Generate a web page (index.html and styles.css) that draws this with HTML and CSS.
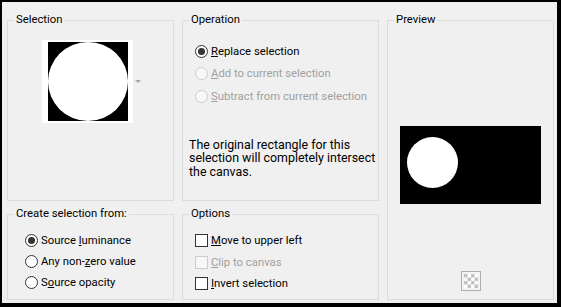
FILE: index.html
```html
<!DOCTYPE html>
<html lang="en">
<head>
  <meta charset="UTF-8">
  <title>Promote Selection</title>
  <link rel="stylesheet" href="styles.css">
</head>
<body>
  <div class="dialog">
    <div class="grid">

      <!-- 当前选区缩略图 -->
      <fieldset class="group sel">
        <legend>Selection</legend>
        <div class="thumb-row">
          <div class="thumb">
            <div class="thumb-img"><div class="disc"></div></div>
          </div>
          <span class="drop"></span>
        </div>
      </fieldset>

      <!-- 操作方式 -->
      <fieldset class="group op">
        <legend>Operation</legend>
        <div class="choices">
          <label class="choice"><span class="radio on"></span><span><u>R</u>eplace selection</span></label>
          <label class="choice dis"><span class="radio"></span><span><u>A</u>dd to current selection</span></label>
          <label class="choice dis"><span class="radio"></span><span><u>S</u>ubtract from current selection</span></label>
        </div>
        <p class="note">The original rectangle for this<br>selection will completely intersect<br>the canvas.</p>
      </fieldset>

      <!-- 预览 -->
      <fieldset class="group preview">
        <legend>Preview</legend>
        <div class="pv">
          <div class="canvas"><div class="dot"></div></div>
          <span class="bg-btn">
            <svg width="20" height="20" viewBox="0 0 20 20">
              <rect x="0.5" y="0.5" width="19" height="19" fill="#f4f4f4" stroke="#adadad"/>
              <rect x="3" y="3" width="14" height="14" fill="#fff"/>
              <g fill="#c3c3c3">
                <rect x="3" y="3" width="3.5" height="3.5"/>
                <rect x="10" y="3" width="3.5" height="3.5"/>
                <rect x="6.5" y="6.5" width="3.5" height="3.5"/>
                <rect x="13.5" y="6.5" width="3.5" height="3.5"/>
                <rect x="3" y="10" width="3.5" height="3.5"/>
                <rect x="10" y="10" width="3.5" height="3.5"/>
                <rect x="6.5" y="13.5" width="3.5" height="3.5"/>
                <rect x="13.5" y="13.5" width="3.5" height="3.5"/>
              </g>
            </svg>
          </span>
        </div>
      </fieldset>

      <!-- 选区来源 -->
      <fieldset class="group from">
        <legend>Create selection from:</legend>
        <div class="choices">
          <label class="choice"><span class="radio on"></span><span>Source <u>l</u>uminance</span></label>
          <label class="choice"><span class="radio"></span><span>Any non-<u>z</u>ero value</span></label>
          <label class="choice"><span class="radio"></span><span>S<u>o</u>urce opacity</span></label>
        </div>
      </fieldset>

      <!-- 选项 -->
      <fieldset class="group opts">
        <legend>Options</legend>
        <div class="choices">
          <label class="choice"><span class="check"></span><span><u>M</u>ove to upper left</span></label>
          <label class="choice dis"><span class="check"></span><span><u>C</u>lip to canvas</span></label>
          <label class="choice"><span class="check"></span><span><u>I</u>nvert selection</span></label>
        </div>
      </fieldset>

    </div>
  </div>
</body>
</html>
```

FILE: styles.css
```css
* {
  margin: 0;
  padding: 0;
  box-sizing: border-box;
}
html, body {
  width: 100%;
  height: 100%;
  overflow: hidden;
  background: #000;
}
body {
  font-family: Roboto, "Noto Sans", sans-serif;
  font-size: 11.3px;
  color: #000;
}

.dialog {
  width: 561px;
  height: 307px;
  border: solid #000;
  border-width: 2px 4px 4px 2px;
  background: #f0f0f0;
  overflow: hidden;
}

.grid {
  display: grid;
  height: 100%;
  grid-template-columns: 167px 197px 167px;
  grid-template-rows: 188px 1fr;
  column-gap: 8px;
  row-gap: 6px;
  padding: 11px 0 3px 5px;
}

/* 分组框 */
.group {
  border: 1px solid #dcdcdc;
  min-width: 0;
}
.group legend {
  margin-left: 6px;
  padding: 0 2px;
  line-height: 14px;
}

.preview {
  grid-column: 3;
  grid-row: 1 / 3;
}

/* 缩略图 */
.thumb-row {
  display: flex;
  align-items: center;
  margin: 13px 0 0 34px;
}
.thumb {
  background: #fff;
  padding: 2px 5px 2px 6px;
}
.thumb-img {
  width: 80px;
  height: 79px;
  background: #000;
}
.disc {
  width: 100%;
  height: 100%;
  border-radius: 50%;
  background: #fff;
}
.drop {
  margin-left: 2px;
  border-left: 3px solid transparent;
  border-right: 3px solid transparent;
  border-top: 3px solid #a8a8a8;
}

/* 单选和复选 */
.choice {
  display: flex;
  align-items: center;
  gap: 3px;
  height: 22.5px;
  white-space: nowrap;
}
.op .choices {
  padding: 13px 0 0 12px;
}
.from .choices {
  padding: 9px 0 0 17px;
}
.from .choice {
  height: 21.2px;
}
.opts .choices {
  padding: 9px 0 0 12px;
}
.opts .choice {
  height: 21.5px;
}

.radio, .check {
  flex: none;
  width: 13px;
  height: 13px;
  border: 1px solid #333;
  background: #fff;
  display: flex;
  align-items: center;
  justify-content: center;
}
.radio {
  border-radius: 50%;
}
.radio.on::after {
  content: '';
  width: 7px;
  height: 7px;
  border-radius: 50%;
  background: #333;
}
.choice.dis {
  color: #a0a0a0;
}
.choice.dis .radio, .choice.dis .check {
  border-color: #cccccc;
  background: #f7f7f7;
}

.note {
  margin: 30px 0 0 6px;
  font-size: 12.4px;
  line-height: 13.5px;
}

/* 预览区 */
.pv {
  display: flex;
  flex-direction: column;
  align-items: center;
}
.canvas {
  margin-top: 99px;
  width: 141px;
  height: 78px;
  background: #000;
  padding: 11px 0 0 7px;
}
.dot {
  width: 51px;
  height: 51px;
  border-radius: 50%;
  background: #fff;
}
.bg-btn {
  display: block;
  margin-top: 67px;
  width: 20px;
  height: 20px;
}
.bg-btn svg {
  display: block;
}
```
